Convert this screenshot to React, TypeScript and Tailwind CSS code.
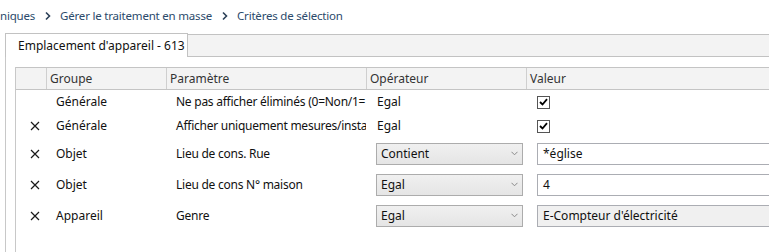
import React from "react";

const font = { fontFamily: '"Noto Sans", "Open Sans", sans-serif' };

function Chevron() {
  return (
    <svg width="8" height="10" viewBox="0 0 8 10" className="ml-[9px] mr-[8px]">
      <path d="M2 1.5 L5.5 5 L2 8.5" fill="none" stroke="#2b3f57" strokeWidth="1.6" />
    </svg>
  );
}

function XIcon() {
  return (
    <svg width="10" height="10" viewBox="0 0 10 10">
      <path d="M1 1 L9 9 M9 1 L1 9" stroke="#1a1a1a" strokeWidth="1.2" />
    </svg>
  );
}

function Check() {
  return (
    <div className="w-[13px] h-[13px] border border-[#555] bg-white flex items-center justify-center">
      <svg width="9" height="8" viewBox="0 0 9 8">
        <path d="M1 4 L3.5 6.5 L8 1.2" fill="none" stroke="#000" strokeWidth="1.8" />
      </svg>
    </div>
  );
}

function Select({ value }: { value: string }) {
  return (
    <div className="w-[147px] h-[22px] border border-[#acacac] bg-gradient-to-b from-[#f0f0f0] to-[#e5e5e5] flex items-center pl-[4px] pr-[4px] justify-between">
      <span>{value}</span>
      <svg width="7" height="5" viewBox="0 0 7 5">
        <path d="M0.5 0.8 L3.5 3.8 L6.5 0.8" fill="none" stroke="#8a8a8a" strokeWidth="1" />
      </svg>
    </div>
  );
}

function Input({ value, gray }: { value: string; gray?: boolean }) {
  return (
    <div
      className={`h-[22px] w-full border border-[#abadb3] flex items-center pl-[5px] ${
        gray ? "bg-[#f0f0f0]" : "bg-white"
      }`}
    >
      {value}
    </div>
  );
}

type Row = {
  x: boolean;
  group: string;
  param: string;
  op: string;
  opSelect?: boolean;
  value: React.ReactNode;
  tall?: boolean;
};

const rows: Row[] = [
  { x: false, group: "Générale", param: "Ne pas afficher éliminés (0=Non/1=", op: "Egal", value: <Check /> },
  { x: true, group: "Générale", param: "Afficher uniquement mesures/insta", op: "Egal", value: <Check /> },
  { x: true, group: "Objet", param: "Lieu de cons. Rue", op: "Contient", opSelect: true, value: <Input value="*église" />, tall: true },
  { x: true, group: "Objet", param: "Lieu de cons N° maison", op: "Egal", opSelect: true, value: <Input value="4" />, tall: true },
  { x: true, group: "Appareil", param: "Genre", op: "Egal", opSelect: true, value: <Input value="E-Compteur d'électricité" gray />, tall: true },
];

export default function App() {
  return (
    <div className="w-[769px] h-[252px] overflow-hidden bg-white text-[12px] text-[#111]" style={font}>
      <div className="w-[820px]">
        {/* breadcrumb */}
        <div className="h-[30px] flex items-center text-[#2b4a6b] text-[11.5px] tracking-[-0.2px] pt-[1px]">
          <span>niques</span>
          <Chevron />
          <span>Gérer le traitement en masse</span>
          <Chevron />
          <span>Critères de sélection</span>
        </div>
        {/* tabs */}
        <div className="flex h-[27px] pt-[4px] pl-[5px]">
          <div className="w-[183px] border-l border-t border-r border-[#c2c2c2] bg-white flex items-center pl-[12px] pt-[1px] -mt-[1px] h-[24px]">
            Emplacement d'appareil - 613
          </div>
          <div className="flex-1 h-[23px] border-t border-b border-[#c2c2c2] bg-[#f3f3f3]" />
        </div>
        {/* panel */}
        <div className="ml-[5px] border-l border-[#c8c8c8] pl-[9px] pt-[10px] h-[200px]">
          <div className="border-l border-[#c8c8c8] h-full">
            {/* header */}
            <div className="grid grid-cols-[30px_120px_200px_160px_1fr] h-[23px] bg-[#f3f3f3] border-t border-b border-[#c4c4c4] text-[#333]">
              <div />
              <div className="border-l border-[#cfcfcf] pl-[3px] flex items-center">Groupe</div>
              <div className="border-l border-[#cfcfcf] pl-[3px] flex items-center">Paramètre</div>
              <div className="border-l border-[#cfcfcf] pl-[3px] flex items-center">Opérateur</div>
              <div className="border-l border-[#cfcfcf] pl-[3px] flex items-center">Valeur</div>
            </div>
            {rows.map((r, i) => (
              <div
                key={i}
                className={`grid grid-cols-[30px_120px_200px_160px_1fr] ${r.tall ? "h-[31px]" : "h-[24px]"} items-center`}
              >
                <div className="flex justify-center pl-[8px]">{r.x ? <XIcon /> : null}</div>
                <div className="pl-[10px] whitespace-nowrap overflow-hidden">{r.group}</div>
                <div className="pl-[10px] whitespace-nowrap overflow-hidden tracking-[-0.25px]">{r.param}</div>
                <div className="pl-[10px] whitespace-nowrap overflow-hidden">
                  {r.opSelect ? <Select value={r.op} /> : <span className="pl-[1px]">{r.op}</span>}
                </div>
                <div className="pl-[11px]">{r.value}</div>
              </div>
            ))}
          </div>
        </div>
      </div>
    </div>
  );
}
